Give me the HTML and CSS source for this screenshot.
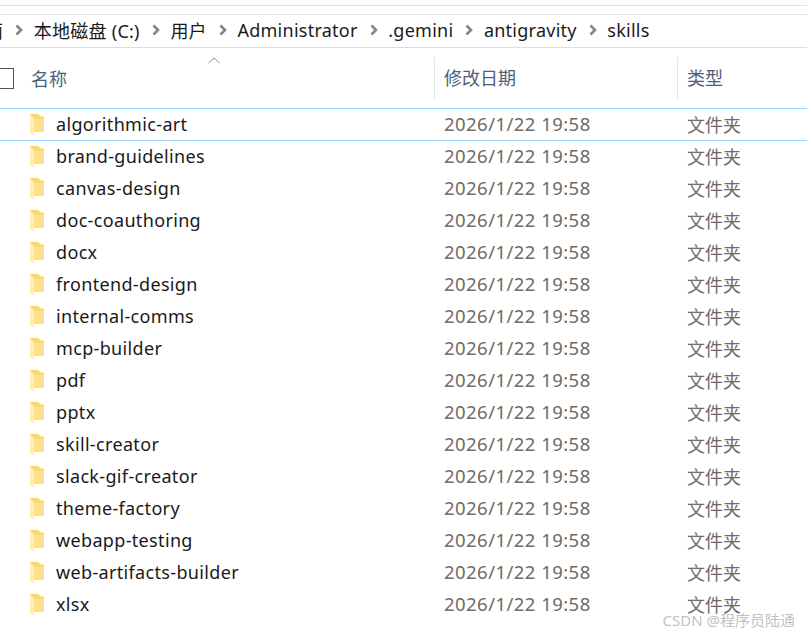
FILE: index.html
```html
<!DOCTYPE html>
<html lang="en">
<head>
    <meta charset="UTF-8">
    <title>skills</title>
    <link rel="stylesheet" href="styles.css">
</head>
<body>
    <div class="explorer">
        <div class="top-strip"></div>
        <div class="breadcrumb" id="breadcrumb"></div>

        <div class="header">
            <div class="col-check"><span class="checkbox"></span></div>
            <div class="col-name">名称</div>
            <div class="col-date">修改日期</div>
            <div class="col-type">类型</div>
            <svg class="sort-arrow" width="14" height="7" viewBox="0 0 14 7"><path d="M1.500 6L7 1l5.500 5" fill="none" stroke="#8c8c8c" stroke-width="1"/></svg>
        </div>

        <div class="rows" id="rows"></div>
    </div>
    <div class="watermark">CSDN @程序员陆通</div>

    <script>
        var crumbs = ["面", "本地磁盘 (C:)", "用户", "Administrator", ".gemini", "antigravity", "skills"];
        var chevron = '<svg class="chevron" width="8" height="12" viewBox="0 0 8 12"><path d="M1.500 1.500L6 6l-4.500 4.500" fill="none" stroke="#858585" stroke-width="2.600"/></svg>';

        document.getElementById("breadcrumb").innerHTML = crumbs.map(function(c) {
            return '<span>' + c + '</span>';
        }).join(chevron);

        var names = ["algorithmic-art", "brand-guidelines", "canvas-design", "doc-coauthoring", "docx",
            "frontend-design", "internal-comms", "mcp-builder", "pdf", "pptx", "skill-creator",
            "slack-gif-creator", "theme-factory", "webapp-testing", "web-artifacts-builder", "xlsx"];

        var folder = '<svg class="folder" width="16" height="24" viewBox="0 0 16 24">'
            + '<path d="M1 1h8.500l2 2.500H15V19H5V20.500L1 19z" fill="#fbd66e"/>'
            + '<path d="M5 5.500H15V19H5z" fill="#fde08a"/>'
            + '<path d="M1 1l4 4.500V22.500L1 20z" fill="#ffefb5"/></svg>';

        var html = "";
        names.forEach(function(name, i) {
            html += '<div class="row' + (i == 0 ? ' selected' : '') + '">'
                + '<div class="col-check"></div>'
                + '<div class="col-name">' + folder + '<span>' + name + '</span></div>'
                + '<div class="col-date">2026/1/22 19:58</div>'
                + '<div class="col-type">文件夹</div></div>';
        });
        document.getElementById("rows").innerHTML = html;
    </script>
</body>
</html>
```

FILE: styles.css
```css
html, body {
    margin: 0;
    height: 100%;
    overflow: hidden;
}
body {
    font-family: "Noto Sans", "Noto Sans CJK SC", sans-serif;
    font-size: 18px;
    background-color: white;
    position: relative;
}
.top-strip {
    height: 8px;
    margin-top: 5px;
    border-top: 1px solid #e0e0e0;
    border-bottom: 1px solid #e0e0e0;
}
.breadcrumb {
    height: 33px;
    border-bottom: 1px solid #dcdcdc;
    display: flex;
    align-items: center;
    color: #1a1a1a;
    margin-left: -15px;
    white-space: nowrap;
    letter-spacing: 0.25px;
    padding-bottom: 2px;
    box-sizing: border-box;
}
.chevron {
    margin: 0 10.600px 0 12px;
    flex-shrink: 0;
}
.header {
    height: 60px;
    display: flex;
    align-items: center;
    position: relative;
    color: #4c607a;
    border-bottom: 1px solid #99d1ff;
}
.sort-arrow {
    position: absolute;
    left: 207px;
    top: 9px;
}
.checkbox {
    display: block;
    width: 20px;
    height: 19px;
    margin-left: -8px;
    border: 1px solid #555;
}
.col-check {
    width: 30px;
    flex-shrink: 0;
}
.col-name {
    width: 404px;
    flex-shrink: 0;
    display: flex;
    align-items: center;
}
.col-date {
    width: 243px;
    flex-shrink: 0;
    padding-left: 10px;
    box-sizing: border-box;
}
.col-type {
    padding-left: 10px;
}
.header .col-date,
.header .col-type {
    height: 42px;
    line-height: 42px;
    border-left: 1px solid #e5e5e5;
    padding-left: 9px;
}
.header .col-name {
    padding-left: 1px;
    box-sizing: border-box;
}
.row {
    height: 32px;
    display: flex;
    align-items: center;
    box-sizing: border-box;
    padding-bottom: 2px;
    color: #6b6b6b;
}
.row .col-name {
    color: #1a1a1a;
    letter-spacing: 0.34px;
}
.row .col-date {
    font-size: 18.500px;
    letter-spacing: 0.45px;
    margin-bottom: 2px;
}
.row.selected {
    box-shadow: inset 0 -1px 0 #99d1ff;
}
.folder {
    margin: 2px 11px 0 -1px;
    flex-shrink: 0;
}
.watermark {
    position: absolute;
    right: 12px;
    bottom: 6px;
    font-size: 15px;
    color: rgba(130, 130, 130, 0.5);
}
```
